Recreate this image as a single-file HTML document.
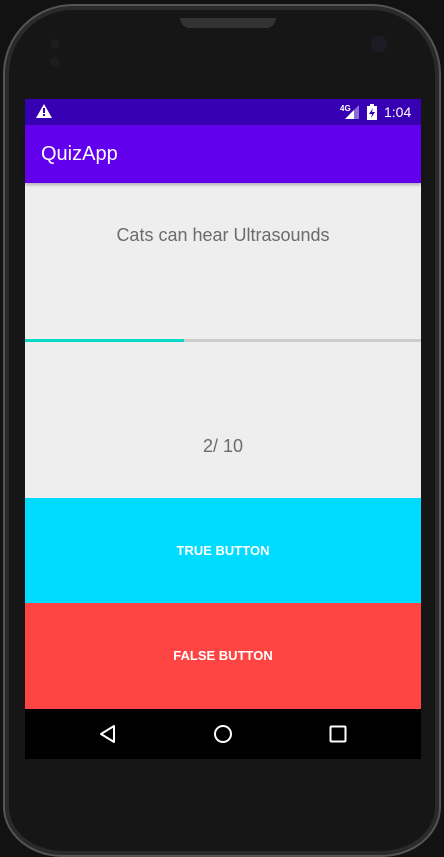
<!DOCTYPE html>
<html><head><style>
body{margin:0;width:444px;height:857px;background:#121212;position:relative;overflow:hidden;font-family:"Liberation Sans",sans-serif}
.phone{position:absolute;left:3px;top:4px;width:438px;height:853px;border-radius:70px 70px 60px 60px/70px 70px 50px 50px;background:#161616;border:2px solid #555;box-sizing:border-box;box-shadow:inset 0 0 0 4px #2a2a2a}
.spk{position:absolute;left:175px;top:12px;width:96px;height:10px;background:#333;border-radius:0 0 12px 12px}
.scr{position:absolute;left:25px;top:99px;width:396px;height:660px;background:#eee}
.sb{position:absolute;left:0;top:0;width:396px;height:26px;background:#3700b3;color:#fff;font-size:14px}
.ab{position:absolute;left:0;top:26px;width:396px;height:58px;background:#6200ee;color:#fff;font-size:20px;line-height:58px;box-shadow:0 2px 3px rgba(0,0,0,.25)}
.q{position:absolute;left:0;top:126px;width:396px;text-align:center;color:#6b6b6b;font-size:18px}
.pb{position:absolute;left:0;top:240px;width:396px;height:3px;background:#ccc}
.pb div{width:159px;height:3px;background:#03dac5}
.n{position:absolute;left:0;top:337px;width:396px;text-align:center;color:#6b6b6b;font-size:18px}
.btn{position:absolute;left:0;width:396px;color:#fff;font-size:13px;font-weight:bold;text-align:center}
.nav{position:absolute;left:0;top:610px;width:396px;height:50px;background:#000}
</style></head><body>
<div class="phone"><div class="spk"></div></div>
<div style="position:absolute;left:50px;top:36px;width:24px;height:12px;"><span style="display:inline-block;width:10px;height:10px;border-radius:50%;background:#1d1d1d"></span> <span style="display:inline-block;width:10px;height:10px;border-radius:50%;background:#1d1d1d"></span></div>
<div style="position:absolute;left:371px;top:36px;width:16px;height:16px;border-radius:50%;background:#1c1c24"></div>
<div class="scr">
<div class="sb">
<svg style="position:absolute;left:11px;top:5px" width="16" height="14"><path d="M8 0L16 14H0Z" fill="#fff"/><rect x="7" y="4" width="2" height="5" fill="#3700b3"/><rect x="7" y="10" width="2" height="2" fill="#3700b3"/></svg>
<span style="position:absolute;left:315px;top:5px;font-size:8px;font-weight:bold">4G</span>
<svg style="position:absolute;left:320px;top:6px" width="14" height="14"><path d="M14 0V14H0Z" fill="#8a6fd6"/><path d="M9 5V14H0Z" fill="#fff"/></svg>
<svg style="position:absolute;left:342px;top:5px" width="10" height="16"><rect x="3" y="0" width="4" height="2" fill="#fff"/><rect x="0" y="2" width="10" height="14" fill="#fff"/><path d="M6 4L2 10H5L4 14L8 8H5Z" fill="#3700b3"/></svg>
<span style="position:absolute;left:359px;top:5px">1:04</span>
</div>
<div class="ab"><span style="margin-left:16px">QuizApp</span></div>
<div class="q">Cats can hear Ultrasounds</div>
<div class="pb"><div></div></div>
<div class="n">2/ 10</div>
<div class="btn" style="top:399px;height:105px;line-height:105px;background:#00dcff">TRUE BUTTON</div>
<div class="btn" style="top:504px;height:106px;line-height:106px;background:#ff4444">FALSE BUTTON</div>
<div class="nav">
<svg style="position:absolute;left:73px;top:15px" width="20" height="20"><path d="M16 2L3 10L16 18Z" fill="none" stroke="#fff" stroke-width="2" stroke-linejoin="round"/></svg>
<svg style="position:absolute;left:188px;top:15px" width="20" height="20"><circle cx="10" cy="10" r="8" fill="none" stroke="#fff" stroke-width="2"/></svg>
<svg style="position:absolute;left:304px;top:16px" width="18" height="18"><rect x="1.5" y="1.5" width="15" height="15" rx="1" fill="none" stroke="#fff" stroke-width="2"/></svg>
</div>
</div>
</body></html>
